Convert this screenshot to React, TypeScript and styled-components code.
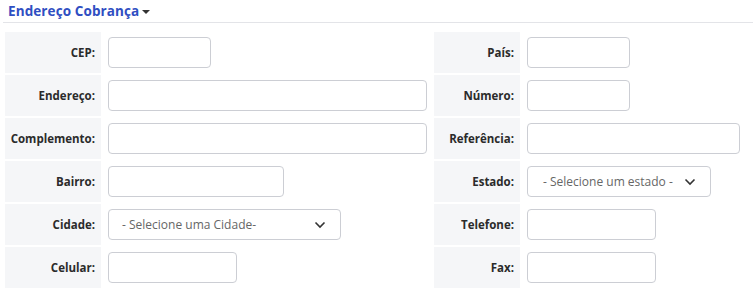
import React from 'react';
import styled, { createGlobalStyle } from 'styled-components';

const GlobalStyle = createGlobalStyle`
  body {
    margin: 0;
    background: #fff;
    font-family: "Open Sans", "Liberation Sans", sans-serif;
  }
`;

const Page = styled.div`
  width: 753px;
  padding: 0 0 0 3px;
  box-sizing: border-box;
`;

const Header = styled.div`
  display: flex;
  align-items: center;
  height: 22px;
  padding-left: 5px;
  border-bottom: 1px solid #e3e4e8;
`;

const Title = styled.span`
  font-size: 13.5px;
  font-weight: 700;
  color: #2f4ec2;
  letter-spacing: 0.1px;
`;

const Caret = styled.span`
  width: 0;
  height: 0;
  margin-left: 3px;
  margin-top: 2px;
  border-left: 4px solid transparent;
  border-right: 4px solid transparent;
  border-top: 4px solid #333;
`;

const Grid = styled.div`
  display: grid;
  grid-template-columns: 96px 329px 86px 1fr;
  grid-auto-rows: 41px;
  gap: 2px;
  margin: 9px 0 0 2px;
`;

const Label = styled.div`
  background: #f5f6f8;
  display: flex;
  align-items: center;
  justify-content: flex-end;
  padding-right: 6px;
  font-size: 11.5px;
  font-weight: 700;
  color: #2b2b2b;
`;

const Cell = styled.div`
  display: flex;
  align-items: center;
  padding-left: 5px;
`;

const Input = styled.div<{ $w: number }>`
  width: ${(p) => p.$w}px;
  height: 31px;
  box-sizing: border-box;
  border: 1px solid #ccced4;
  border-radius: 4px;
  background: #fff;
`;

const Select = styled(Input)<{ $pl: number }>`
  display: flex;
  align-items: center;
  justify-content: space-between;
  padding: 0 14px 0 ${(p) => p.$pl}px;
  font-size: 12px;
  color: #666;
`;

const Chevron = () => (
  <svg width="12" height="8" viewBox="0 0 12 8">
    <path d="M1.5 1.5 L6 6 L10.5 1.5" fill="none" stroke="#333" strokeWidth="1.6" />
  </svg>
);

type Field = { label: string; w: number; select?: string; pl?: number };

const rows: [Field, Field][] = [
  [{ label: 'CEP:', w: 103 }, { label: 'País:', w: 103 }],
  [{ label: 'Endereço:', w: 319 }, { label: 'Número:', w: 103 }],
  [{ label: 'Complemento:', w: 319 }, { label: 'Referência:', w: 213 }],
  [{ label: 'Bairro:', w: 176 }, { label: 'Estado:', w: 184, select: '- Selecione um estado -', pl: 15 }],
  [{ label: 'Cidade:', w: 233, select: '- Selecione uma Cidade-', pl: 13 }, { label: 'Telefone:', w: 129 }],
  [{ label: 'Celular:', w: 129 }, { label: 'Fax:', w: 129 }],
];

const renderField = (f: Field) => (
  <>
    <Label>{f.label}</Label>
    <Cell>
      {f.select ? (
        <Select $w={f.w} $pl={f.pl ?? 13}>
          <span>{f.select}</span>
          <Chevron />
        </Select>
      ) : (
        <Input $w={f.w} />
      )}
    </Cell>
  </>
);

export default function App() {
  return (
    <Page>
      <GlobalStyle />
      <Header>
        <Title>Endereço Cobrança</Title>
        <Caret />
      </Header>
      <Grid>
        {rows.map(([a, b], i) => (
          <React.Fragment key={i}>
            {renderField(a)}
            {renderField(b)}
          </React.Fragment>
        ))}
      </Grid>
    </Page>
  );
}
